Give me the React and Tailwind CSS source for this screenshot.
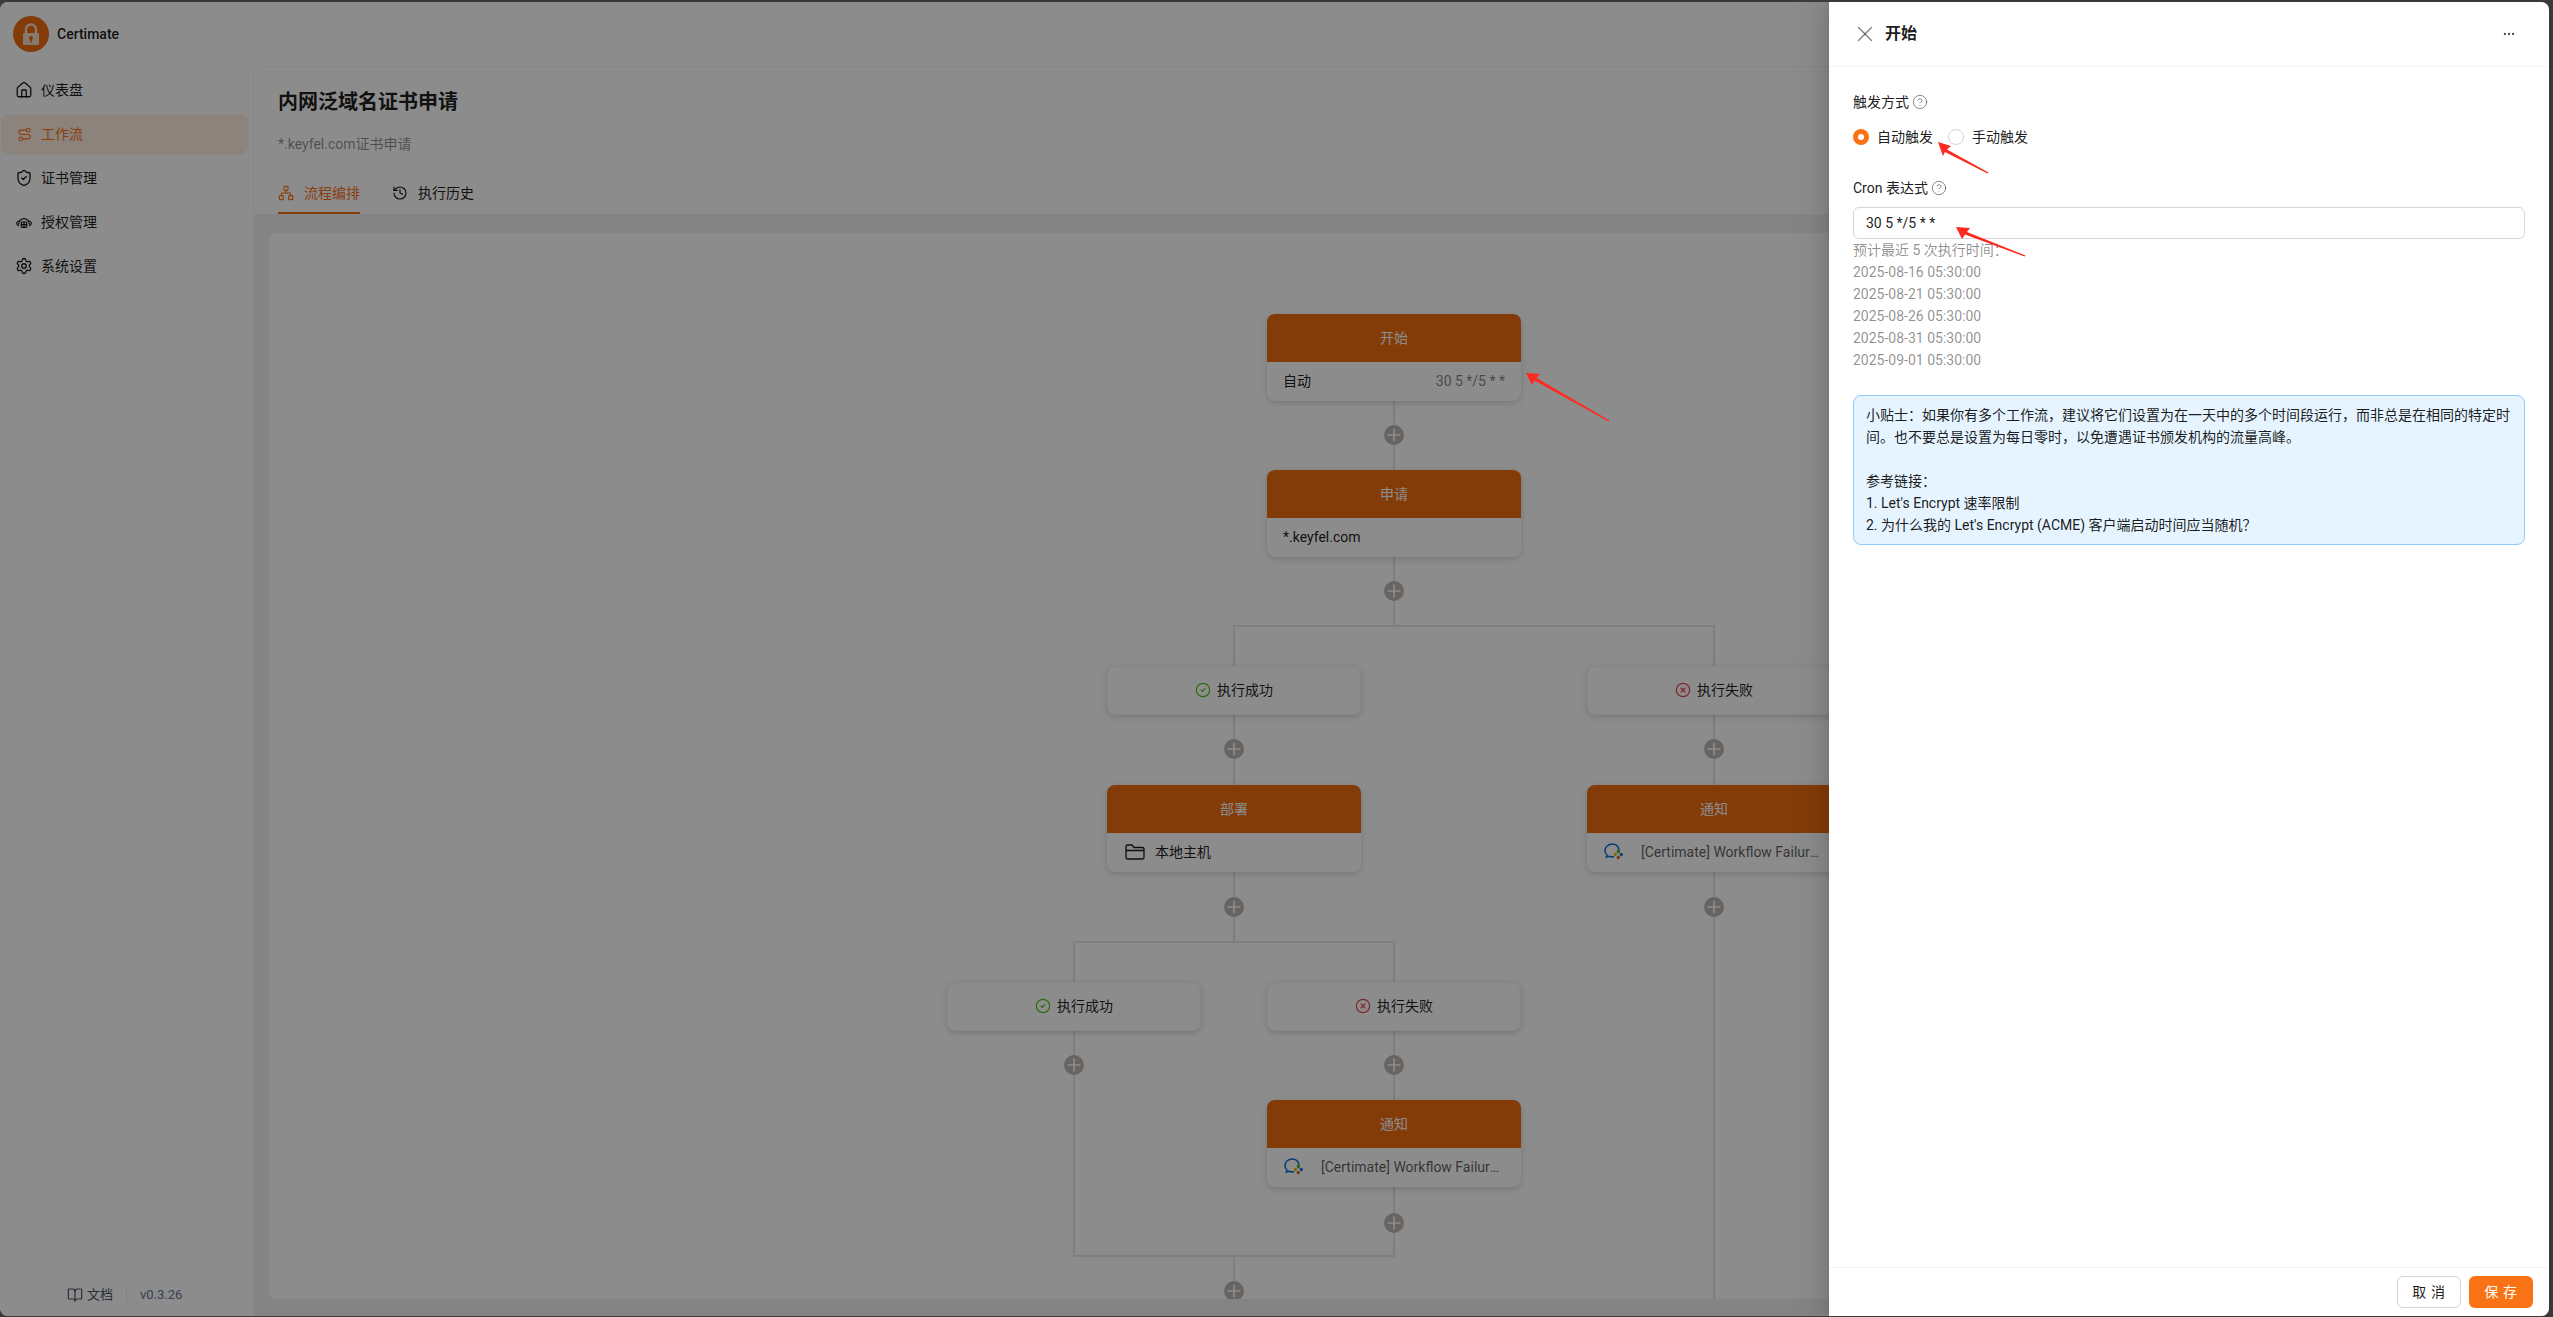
import React from 'react';
import {
  House, Route, ShieldCheck, Settings, Network, History, BookOpen, X, Ellipsis,
  CircleHelp, CircleCheck, CircleX, Plus,
} from 'lucide-react';

const Logo = () => (
  <svg width="36" height="36" viewBox="0 0 36 36">
    <circle cx="18" cy="18" r="18" fill="#ef6c10" />
    <path d="M13 18v-4.500a5 5 0 0 1 10 0V18" fill="none" stroke="#f7dcc8" strokeWidth="2.4" />
    <rect x="10" y="17" width="16" height="12" rx="1" fill="#f7dcc8" />
    <circle cx="18" cy="22" r="2" fill="#ef6c10" />
    <rect x="17.200" y="22" width="1.600" height="4.500" fill="#ef6c10" />
  </svg>
);

const AccessIcon = () => (
  <svg width="16" height="16" viewBox="0 0 24 24" fill="none" stroke="currentColor" strokeWidth="1.800" strokeLinecap="round" strokeLinejoin="round">
    <path d="M4 15a8 8 0 0 1 16 0" />
    <path d="M4 10.500C2.500 11 1 12.200 1 14s1.500 3 3 3.500" />
    <path d="M20 10.500c1.500.5 3 1.700 3 3.500s-1.500 3-3 3.500" />
    <rect x="8" y="12" width="8" height="8" rx="1" />
    <path d="M8 16h8M12 12v8" />
  </svg>
);

const FolderIcon = () => (
  <svg width="20" height="16" viewBox="0 0 20 16" fill="none" stroke="#111827" strokeWidth="1.300" strokeLinejoin="round" className="ml-[2px] shrink-0">
    <path d="M1 2.500A1.500 1.500 0 0 1 2.500 1H7l2 2.500h8.500A1.500 1.500 0 0 1 19 5v8.500a1.500 1.500 0 0 1-1.500 1.500h-15A1.500 1.500 0 0 1 1 13.500z" />
    <path d="M1 6.500h18" />
  </svg>
);

const WecomIcon = () => (
  <svg width="20" height="18" viewBox="0 0 20 18" fill="none" className="shrink-0">
    <path d="M14.500 9.500C16 5 13 1 8.500 1 4 1 1 4 1 7.500c0 2 .8 3.500 2 4.500l-.7 2 2.700-.8c1.500.6 3 .8 4.500.6" stroke="#0a6fd6" strokeWidth="1.500" strokeLinecap="round" />
    <rect x="12.800" y="7" width="3" height="3" rx="1" fill="#5bb318" transform="rotate(45 14.300 8.500)" />
    <rect x="9.800" y="10" width="3" height="3" rx="1" fill="#f5b800" transform="rotate(45 11.300 11.500)" />
    <rect x="12.800" y="13" width="3" height="3" rx="1" fill="#e8590c" transform="rotate(45 14.300 14.500)" />
    <rect x="15.800" y="10" width="3" height="3" rx="1" fill="#0a6fd6" transform="rotate(45 17.300 11.500)" />
  </svg>
);

const NavItem = ({ icon: Icon, size = 18, label, active }) => (
  <div className={`ml-[1px] flex h-10 w-[247px] items-center gap-2 rounded-lg pl-[14px] text-sm ${active ? 'bg-[#fdeee2] text-[#f97316]' : 'text-black/90'}`}>
    <span className="flex w-[18px] justify-center">
      <Icon size={size} strokeWidth={1.75} />
    </span>
    <span>{label}</span>
  </div>
);

const FlowNode = ({ title, className, children }) => (
  <div className={`absolute w-[254px] overflow-hidden rounded-lg bg-white shadow-[0_2px_6px_rgba(0,0,0,0.16)] ${className}`}>
    <div className="flex h-12 items-center justify-center bg-[#ef6c10] text-sm text-white">{title}</div>
    <div className="flex h-[39px] items-center px-4 pb-[2px] text-sm text-black/90">{children}</div>
  </div>
);

const Branch = ({ ok, className }) => (
  <div className={`absolute flex h-[49px] w-[254px] items-center justify-center gap-[6px] rounded-lg border border-gray-100 bg-white pb-[1px] text-sm text-black/90 shadow-[0_2px_6px_rgba(0,0,0,0.16)] ${className}`}>
    {ok ? <CircleCheck size={16} strokeWidth={1.75} className="text-[#52c41a]" /> : <CircleX size={16} strokeWidth={1.75} className="text-[#e5484d]" />}
    <span>{ok ? '执行成功' : '执行失败'}</span>
  </div>
);

const AddButton = ({ className }) => (
  <div className={`absolute flex h-5 w-5 items-center justify-center rounded-full bg-[#bcb6b2] text-white ${className}`}>
    <Plus size={20} strokeWidth={2} />
  </div>
);

const NoticeBody = () => (
  <div className="flex items-center gap-[17px] pl-[1px] text-black/65">
    <WecomIcon />
    <span className="w-[178px] truncate">[Certimate] Workflow Failure Alert!</span>
  </div>
);

const Canvas = () => (
  <div className="relative mb-[17px] ml-[15px] mr-4 mt-[18px] flex-1 overflow-hidden rounded-lg bg-white">
    {/* connectors */}
    <div className="absolute left-[1124px] top-[167px] h-[226px] w-[2px] bg-neutral-200" />
    <div className="absolute left-[964px] top-[392px] h-[2px] w-[482px] bg-neutral-200" />
    <div className="absolute left-[964px] top-[392px] h-[317px] w-[2px] bg-neutral-200" />
    <div className="absolute left-[1444px] top-[392px] h-[700px] w-[2px] bg-neutral-200" />
    <div className="absolute left-[804px] top-[708px] h-[2px] w-[322px] bg-neutral-200" />
    <div className="absolute left-[804px] top-[708px] h-[316px] w-[2px] bg-neutral-200" />
    <div className="absolute left-[1124px] top-[708px] h-[316px] w-[2px] bg-neutral-200" />
    <div className="absolute left-[804px] top-[1022px] h-[2px] w-[322px] bg-neutral-200" />
    <div className="absolute left-[964px] top-[1022px] h-[50px] w-[2px] bg-neutral-200" />

    {/* nodes */}
    <FlowNode title="开始" className="left-[998px] top-[81px]">
      <span className="flex-1">自动</span>
      <span className="text-black/50">30 5 */5 * *</span>
    </FlowNode>
    <FlowNode title="申请" className="left-[998px] top-[237px]">*.keyfel.com</FlowNode>
    <Branch ok className="left-[838px] top-[433px]" />
    <Branch className="left-[1318px] top-[433px]" />
    <FlowNode title="部署" className="left-[838px] top-[552px]">
      <FolderIcon />
      <span className="ml-[10px]">本地主机</span>
    </FlowNode>
    <FlowNode title="通知" className="left-[1318px] top-[552px]"><NoticeBody /></FlowNode>
    <Branch ok className="left-[678px] top-[749px]" />
    <Branch className="left-[998px] top-[749px]" />
    <FlowNode title="通知" className="left-[998px] top-[867px]"><NoticeBody /></FlowNode>

    <AddButton className="left-[1115px] top-[192px]" />
    <AddButton className="left-[1115px] top-[348px]" />
    <AddButton className="left-[955px] top-[506px]" />
    <AddButton className="left-[1435px] top-[506px]" />
    <AddButton className="left-[955px] top-[664px]" />
    <AddButton className="left-[1435px] top-[664px]" />
    <AddButton className="left-[795px] top-[822px]" />
    <AddButton className="left-[1115px] top-[822px]" />
    <AddButton className="left-[1115px] top-[980px]" />
    <AddButton className="left-[955px] top-[1048px]" />
  </div>
);

const Drawer = () => (
  <div className="absolute bottom-0 right-0 top-0 flex w-[720px] flex-col bg-white text-sm text-black/90 shadow-[-6px_0_16px_0_rgba(0,0,0,0.08),-3px_0_6px_-4px_rgba(0,0,0,0.12),-9px_0_28px_8px_rgba(0,0,0,0.05)]">
    <div className="flex h-[65px] shrink-0 items-center border-b border-gray-100 pl-[23px] pr-[33px]">
      <X size={26} strokeWidth={1.25} className="text-black/50" />
      <span className="ml-[7px] flex-1 text-base font-semibold">开始</span>
      <Ellipsis size={14} className="text-black/70" />
    </div>
    <div className="flex-1 px-6 pt-6 leading-[22px]">
      <div className="mb-2 flex items-center gap-[3px]">
        触发方式 <CircleHelp size={16} strokeWidth={1.5} className="text-black/45" />
      </div>
      <div className="mb-6 flex h-8 items-center">
        <span className="flex h-4 w-4 items-center justify-center rounded-full bg-[#f97316]">
          <span className="h-[6px] w-[6px] rounded-full bg-white" />
        </span>
        <span className="ml-2">自动触发</span>
        <span className="ml-[15px] h-4 w-4 rounded-full border border-gray-300" />
        <span className="ml-2">手动触发</span>
      </div>
      <div className="mb-2 flex items-center gap-[3px]">
        Cron 表达式 <CircleHelp size={16} strokeWidth={1.5} className="text-black/45" />
      </div>
      <div className="flex h-8 items-center rounded-md border border-gray-300 px-3">30 5 */5 * *</div>
      <div className="text-black/45">
        <div>预计最近 5 次执行时间：</div>
        <div>2025-08-16 05:30:00</div>
        <div>2025-08-21 05:30:00</div>
        <div>2025-08-26 05:30:00</div>
        <div>2025-08-31 05:30:00</div>
        <div>2025-09-01 05:30:00</div>
      </div>
      <div className="mt-6 rounded-lg border border-[#91caff] bg-[#e6f4ff] px-3 py-2">
        <div>小贴士：如果你有多个工作流，建议将它们设置为在一天中的多个时间段运行，而非总是在相同的特定时间。也不要总是设置为每日零时，以免遭遇证书颁发机构的流量高峰。</div>
        <div className="h-[22px]" />
        <div>参考链接：</div>
        <div>1. Let's Encrypt 速率限制</div>
        <div>2. 为什么我的 Let's Encrypt (ACME) 客户端启动时间应当随机？</div>
      </div>
    </div>
    <div className="flex shrink-0 justify-end gap-2 border-t border-gray-100 px-4 py-2">
      <button className="h-8 w-16 rounded-md border border-gray-300 bg-white pl-[4px] tracking-[0.34em]">取消</button>
      <button className="h-8 w-16 rounded-md bg-[#f97316] pl-[4px] tracking-[0.34em] text-white">保存</button>
    </div>
  </div>
);

// red annotation arrows drawn on top of the screenshot
const Arrows = () => (
  <svg className="pointer-events-none absolute left-0 top-0" width="2553" height="1317" fill="#ff2a1f">
    <polygon points="1526,373 1540,374 1536.500,378 1609.500,420.500 1608.500,421.500 1534.500,380.500 1532,385" />
    <polygon points="1938,142 1951,146 1947,149.500 1988.500,172.500 1987.500,173.500 1945,152 1943,156" />
    <polygon points="1956,227 1970,228 1967,232 2025.500,255.500 2024.500,256.500 1965,234.500 1962,239" />
  </svg>
);

const App = () => (
  <div className="relative h-screen w-full overflow-hidden bg-[#3a3a3a] pb-[1px] pr-[4px] pt-[2px] font-['Roboto','Noto_Sans_CJK_SC',sans-serif]">
    <div className="relative flex h-full overflow-hidden rounded-lg bg-white">
      <aside className="flex w-[253px] shrink-0 flex-col text-black/90">
        <div className="flex h-16 shrink-0 items-center gap-2 pl-[13px] text-sm font-medium">
          <Logo />
          <span>Certimate</span>
        </div>
        <nav className="mt-1 flex flex-1 flex-col gap-1">
          <NavItem icon={House} label="仪表盘" />
          <NavItem icon={Route} size={15} label="工作流" active />
          <NavItem icon={ShieldCheck} label="证书管理" />
          <NavItem icon={AccessIcon} label="授权管理" />
          <NavItem icon={Settings} label="系统设置" />
        </nav>
        <div className="flex h-[42px] items-start pl-[67px] pt-[11px] text-[13px] text-slate-500">
          <span className="flex items-center gap-1 text-gray-600"><BookOpen size={16} strokeWidth={1.75} /> 文档</span>
          <span className="mx-[13px] mt-[3px] h-[14px] w-px bg-gray-200" />
          <span>v0.3.26</span>
        </div>
      </aside>

      <main className="mt-16 flex min-w-0 flex-1 flex-col rounded-tl-lg border-l border-t border-gray-100 bg-[#f1f1f1]">
        <div className="h-[148px] shrink-0 border-b border-gray-100 bg-white pl-6">
          <h1 className="pt-[21px] text-xl font-semibold leading-7 text-black/90">内网泛域名证书申请</h1>
          <p className="mt-[17px] text-sm leading-[22px] text-black/45">*.keyfel.com证书申请</p>
          <div className="mt-[14px] flex h-[45px] gap-8 text-sm">
            <div className="flex items-center gap-[10px] border-b-2 border-[#f97316] pt-[4px] text-[#f97316]">
              <Network size={16} strokeWidth={1.75} /> 流程编排
            </div>
            <div className="flex items-center gap-[10px] pb-[2px] pt-[4px] text-black/90">
              <History size={16} strokeWidth={1.75} /> 执行历史
            </div>
          </div>
        </div>
        <Canvas />
      </main>

      <div className="absolute inset-0 bg-black/45" />
      <Drawer />
    </div>
    <Arrows />
  </div>
);

export default App;
